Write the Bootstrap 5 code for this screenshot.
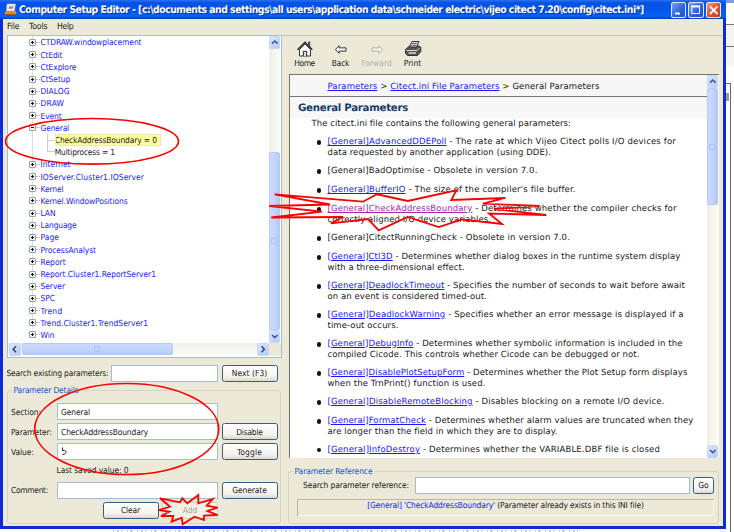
<!DOCTYPE html>
<html lang="en">
<head>
<meta charset="utf-8">
<title>Computer Setup Editor</title>
<link href="https://cdn.jsdelivr.net/npm/bootstrap@5.3.0/dist/css/bootstrap.min.css" rel="stylesheet">
<style>
html,body{width:734px;height:532px;overflow:hidden}
body{background:#fff;font-family:"DejaVu Sans Condensed","DejaVu Sans",sans-serif;font-stretch:condensed;font-size:8.4px;line-height:12px;color:#222;text-rendering:geometricPrecision}
.fit{display:inline-block;white-space:pre}
.stage{width:734px;height:532px}
.win{width:726px;height:529px;background:#ece9d8;border:solid #0a2bd6;border-width:0 3px 3px 3px}
.titlebar{height:19px;margin:0 -3px;padding:0 5px 0 4px;background:linear-gradient(#2a72f0 0,#0651e6 15%,#0557ec 60%,#0463fa 85%,#0440c8);color:#fff;font-weight:700;font-size:10.3px;text-shadow:1px 1px #0a3296}
.appicon{margin-right:2px}
.capbtns{gap:2px}
.capbtn{width:15.5px;height:16px;border:1px solid #dfe9ff;border-radius:2px;background:linear-gradient(135deg,#7ba2f6,#2a5fe0 60%,#2452cc)}
.capclose{background:linear-gradient(135deg,#f0a184,#e2512b 50%,#c8401c)}
.menus{height:16px;padding:1.5px 0 0 4px;font-size:8.6px;gap:9.5px}
.leftcol{width:278px;padding-left:3.5px}
.treebox{width:275px;height:323px;border:1px solid #a6bfd3;background:#fff}
.rows{height:307px;padding:.4px 0 0 21px;color:#1a1aff}
.trow{height:12.196px}
.pm{width:7px;height:7px;border:1px solid #8fa6b5;border-radius:1px;background:linear-gradient(90deg,#111,#111) 1px 2px/3px 1px no-repeat,#f3f2ea;position:relative}
.pm.plus::after{content:"";position:absolute;left:2px;top:1px;width:1px;height:3px;background:#111}
.stem{width:4px;margin-right:1px;border-top:1px dotted #bbb}
.trunk{background:linear-gradient(#ddd,#ddd) 3px 0/1px 100% no-repeat}
.kid{color:#222;padding-left:18px}
.kid .twig{width:8.3px;height:12px;border-left:1px solid #ccc;background:linear-gradient(#ccc,#ccc) 0 6px/6px 1px no-repeat}
.kid.final .twig{height:6px;border-bottom:1px solid #ccc;background:none;align-self:flex-start}
.sel{background:#ffff99;width:106.5px;height:12px;outline:1px solid #ebe9b4;outline-offset:-1px}
.vbar{width:12px;background:linear-gradient(90deg,#f0efe6,#fdfdfa)}
.hbar{height:13px;padding-left:1.5px;gap:1px;background:linear-gradient(#f0efe6,#fdfdfa)}
.corner{width:12px;background:#ece9d8}
.sbtn{width:11.5px;height:13px;border-radius:2px;background:linear-gradient(135deg,#dbe6ff,#b5cbfa);border:1px solid #c5d6f8}
.vthumb{width:11.5px;border-radius:2px;background:linear-gradient(90deg,#cbdafe,#c2d3fd 60%,#b3c8f6);border:1px solid #b6caf5}
.treethumb{height:178px;margin-top:103px}
.docthumb{height:117px}
.hthumb{height:12px;width:151.5px;border-radius:2px;background:linear-gradient(#cbdafe,#c2d3fd 60%,#b3c8f6);border:1px solid #b6caf5}
.grip{width:6px;height:6px;border:1px solid #a9c1f3;border-radius:1px}
.inp{background:#fff;border:1px solid #a3bdd2;height:17px;padding-left:3.5px}
.xbtn{height:17px;width:56px;border:1px solid #335f88;border-radius:2.5px;background:linear-gradient(#fff,#f4f3ee 70%,#dcd8cb);white-space:nowrap}
.xbtn.off{border-color:#d4d0c0;background:#f3f1e7;color:#a6a497}
.gobtn{width:21px}
.findrow{height:17px;margin-top:6.5px}
.findrow .inp{width:106.5px;margin:0 4px 0 2.5px}
.grp{border:1px solid #d6d3c2;border-radius:3px;position:relative}
.details{width:274.5px;height:134px;margin-top:8px;padding-top:9.5px}
.legendtxt{position:absolute;top:-7px;left:4px;padding:0 2px;background:#ece9d8;color:#1a52cf}
.frow{padding:3px 0 0 3.5px}
.frow .inp{width:161px;margin-right:4px}
.lab{width:45.5px}
.saved{padding:4px 0 0 49px;height:18.5px}
.acts{padding:3px 0 0 95px;gap:3.5px}
.rightcol{width:442px;border-top:1px solid #c9c6b5}
.tools{height:38px;padding:4px 0 0 5.5px}
.tool{width:36px}
.dim{color:#b5b2a3}
.doc{width:430px;height:384px;margin-left:7.5px;border:solid #77756a;border-width:1.5px 0 0 1.5px;background:#fff;font-family:"DejaVu Sans",sans-serif;font-stretch:normal;font-size:8.5px;line-height:11.3px}
.band{background:#f7f7f7}
.crumbs{height:22px;border-bottom:1px solid #777;padding:6.5px 0 0 38px}
.heading{height:21px;font-size:10.2px;font-weight:700;color:#163c6e;padding:5.5px 0 0 8.5px}
.intro{height:18.7px;padding:1.4px 0 0 22px}
.doc a{color:#1a1aff;text-decoration:underline;text-underline-offset:1px}
.doc a.seen{color:#a02aa8}
.plist{padding-left:38px;list-style:none}
.plist li{position:relative;margin-bottom:7.7px;height:11.3px}
.plist li.two{margin-bottom:6.4px;height:22.6px}
.plist li::before{content:"";position:absolute;left:-10.5px;top:3.6px;width:4.4px;height:4.4px;border-radius:50%;background:#111}
.plist .fit{display:table;height:11.3px}
.refbox{width:431.5px;height:53px;margin:13px 0 0 6.5px}
.refrow{padding:4.5px 0 0 14.5px}
.refrow .inp{width:275px;margin:0 3.5px 0 5.5px}
.status{height:17.5px;margin:5px 4.5px 0 8px;padding-bottom:5px;border:solid #b9b6a6;border-width:1px 0 0 1px;box-shadow:inset -1px -1px #f8f7f0}
.key{color:#1a1aff}
.behind{width:8px;height:532px;background:linear-gradient(#7f9bea,#7f9bea) 0 0/100% 3px no-repeat,linear-gradient(#777,#777) 0 24px/100% 1px no-repeat,linear-gradient(#777,#777) 0 46px/100% 1px no-repeat,linear-gradient(#f4f4f4,#f4f4f4) 0 24px/100% 42px no-repeat,#fff}
.behind .edge{width:5px;height:449px;margin-top:83px;border:solid #666;border-width:1px 1px 0 0;background:linear-gradient(#999,#999) 0 9px/3px 8px no-repeat}
.marks{position:absolute;left:0;top:0;pointer-events:none}
</style>
<script src="https://cdn.jsdelivr.net/npm/bootstrap@5.3.0/dist/js/bootstrap.bundle.min.js"></script>
</head>
<body>
<div class="stage position-relative overflow-hidden">
<div class="d-flex">
<div class="win d-flex flex-column flex-shrink-0">
  <div class="titlebar d-flex align-items-center flex-shrink-0">
    <svg width="13" height="13" viewBox="0 0 13 13" class="appicon"><path d="M3 1h8.500l-1 7h-8z" fill="#f3efe4" stroke="#c9b69a" stroke-width=".6"/><path d="M5 3.200h4.500l-.5 2.600H4.600z" fill="#8d8f96"/><path d="M.8 9.300 2.500 8h9l.7 1.300v2.600H.8z" fill="#e58a2e"/><path d="M.8 11.700h11.400" stroke="#8f4a10"/></svg>
    <span class="fit" data-w="624.5">Computer Setup Editor - [c:\documents and settings\all users\application data\schneider electric\vijeo citect 7.20\config\citect.ini*]</span>
    <div class="capbtns d-flex ms-auto">
      <div class="capbtn"><svg width="13" height="14" class="d-block"><path d="M3 10.500h5" stroke="#fff" stroke-width="2"/></svg></div>
      <div class="capbtn"><svg width="13" height="14" class="d-block"><path d="M2.800 3.200h7.700v7.300H2.800z" fill="none" stroke="#fff"/><path d="M2.300 3.500h8.700" stroke="#fff" stroke-width="1.800"/></svg></div>
      <div class="capbtn capclose"><svg width="13" height="14" class="d-block"><path d="m3 3.300 7.500 7.700m0-7.700L3 11" stroke="#fff" stroke-width="1.800"/></svg></div>
    </div>
  </div>
  <div class="menus d-flex flex-shrink-0"><span class="fit" data-w="12.5">File</span><span class="fit" data-w="18.5">Tools</span><span class="fit" data-w="16.5">Help</span></div>
  <div class="d-flex">
    <div class="leftcol flex-shrink-0">
      <div class="treebox d-flex flex-column">
        <div class="d-flex">
          <div class="rows flex-grow-1" id="tree"></div>
          <div class="vbar d-flex flex-column flex-shrink-0">
            <div class="sbtn"><svg width="10" height="11" class="d-block"><path d="m2 6.700 2.800-2.700 2.800 2.700" fill="none" stroke="#445c85" stroke-width="1.600"/></svg></div>
            <div class="vthumb treethumb d-flex align-items-center justify-content-center"><i class="grip"></i></div>
            <div class="sbtn"><svg width="10" height="11" class="d-block"><path d="m2 4 2.800 2.700 2.800-2.700" fill="none" stroke="#445c85" stroke-width="1.600"/></svg></div>
          </div>
        </div>
        <div class="d-flex">
          <div class="hbar d-flex flex-grow-1">
            <div class="sbtn"><svg width="10" height="11" class="d-block"><path d="m6 2.300-2.800 3 2.800 3" fill="none" stroke="#334c75" stroke-width="1.600"/></svg></div>
            <div class="hthumb d-flex align-items-center justify-content-center"><i class="grip"></i></div>
            <div class="sbtn ms-auto"><svg width="10" height="11" class="d-block"><path d="m3.500 2.300 2.800 3-2.800 3" fill="none" stroke="#334c75" stroke-width="1.600"/></svg></div>
          </div>
          <div class="corner"></div>
        </div>
      </div>
      <div class="findrow d-flex align-items-center">
        <span class="fit" data-w="102">Search existing parameters:</span>
        <div class="inp"></div>
        <div class="xbtn d-flex align-items-center justify-content-center"><span class="fit" data-w="35.5">Next (F3)</span></div>
      </div>
      <div class="grp details">
        <span class="legendtxt"><span class="fit" data-w="65">Parameter Details</span></span>
        <div class="frow d-flex align-items-center"><span class="lab"><span class="fit" data-w="30">Section:</span></span><div class="inp d-flex align-items-center"><span class="fit" data-w="29">General</span></div></div>
        <div class="frow d-flex align-items-center"><span class="lab"><span class="fit" data-w="41">Parameter:</span></span><div class="inp d-flex align-items-center"><span class="fit" data-w="87">CheckAddressBoundary</span></div><div class="xbtn d-flex align-items-center justify-content-center"><span class="fit" data-w="26.5">Disable</span></div></div>
        <div class="frow d-flex align-items-center"><span class="lab"><span class="fit" data-w="23">Value:</span></span><div class="inp d-flex align-items-center"><svg width="6" height="9"><path d="M1.500 .5v3h1.800M3.300 3l1.500 1.500c.3 1-.3 3-3.300 3" fill="none" stroke="#222"/></svg></div><div class="xbtn d-flex align-items-center justify-content-center"><span class="fit" data-w="25">Toggle</span></div></div>
        <div class="saved"><span class="fit" data-w="72">Last saved value: 0</span></div>
        <div class="frow d-flex align-items-center"><span class="lab"><span class="fit" data-w="37">Comment:</span></span><div class="inp"></div><div class="xbtn d-flex align-items-center justify-content-center"><span class="fit" data-w="34.5">Generate</span></div></div>
        <div class="acts d-flex"><div class="xbtn d-flex align-items-center justify-content-center"><span class="fit" data-w="19">Clear</span></div><div class="xbtn off d-flex align-items-center justify-content-center"><span class="fit" data-w="14.5">Add</span></div></div>
      </div>
    </div>
    <div class="rightcol flex-shrink-0">
      <div class="tools d-flex">
        <div class="tool d-flex flex-column align-items-center"><svg width="18" height="17" viewBox="0 0 18 17"><path d="M3.500 9.500V16h11V9.500L9 4z" fill="#fff" stroke="#333"/><path d="M1.500 9.800 9 2.300l7.300 7.500" fill="none" stroke="#222" stroke-width="1.300"/><path d="M12 1.500h2.300V7L12 4.800z" fill="#555"/><path d="M7.300 16v-4.700h3.400V16" fill="#ddd" stroke="#222"/></svg><span class="fit" data-w="20.5">Home</span></div>
        <div class="tool d-flex flex-column align-items-center"><svg width="14" height="17" viewBox="0 0 14 17"><path d="M1.300 9.500 5.200 5.700v2.200h6.800v3.200H5.200v2.200z" fill="#fff" stroke="#333"/></svg><span class="fit" data-w="17.5">Back</span></div>
        <div class="tool dim d-flex flex-column align-items-center"><svg width="14" height="17" viewBox="0 0 14 17"><path d="M12.700 9.500 8.800 5.700v2.200H2v3.200h6.800v2.200z" fill="#f5f3e8" stroke="#b5b2a3"/></svg><span class="fit" data-w="30.5">Forward</span></div>
        <div class="tool d-flex flex-column align-items-center"><svg width="18" height="17" viewBox="0 0 18 17"><path d="m1.500 9.500 4-3.500H15l1.800 1.200v4.300l-3.300 4H3.500l-2-2z" fill="#555" stroke="#333"/><path d="m5.500 7 2.500-5.500h7L12.500 7z" fill="#ddd" stroke="#333"/><path d="M8.300 3.500h4.500M7.500 5.300h4.700" stroke="#666"/><path d="M2.300 10.500H13l2.500-2.500" fill="none" stroke="#ddd"/><path d="M4.500 13H12" stroke="#eee" stroke-width="1.300"/></svg><span class="fit" data-w="17.5">Print</span></div>
      </div>
      <div class="doc d-flex">
        <div class="flex-grow-1 overflow-hidden">
          <div class="band crumbs"><span class="fit" data-w="272"><a href="#">Parameters</a> &gt; <a href="#">Citect.ini File Parameters</a> &gt; General Parameters</span></div>
          <div class="band heading"><span class="fit" data-w="110">General Parameters</span></div>
          <div class="intro"><span class="fit" data-w="259.5">The citect.ini file contains the following general parameters:</span></div>
          <ul class="plist mb-0">
            <li class="two"><span class="fit" data-w="348.5"><a href="#">[General]AdvancedDDEPoll</a> - The rate at which Vijeo Citect polls I/O devices for</span><span class="fit" data-w="223.5">data requested by another application (using DDE).</span></li>
            <li><span class="fit" data-w="210">[General]BadOptimise - Obsolete in version 7.0.</span></li>
            <li><span class="fit" data-w="248"><a href="#">[General]BufferIO</a> - The size of the compiler's file buffer.</span></li>
            <li class="two"><span class="fit" data-w="349"><a href="#" class="seen">[General]CheckAddressBoundary</a> - Determines whether the compiler checks for</span><span class="fit" data-w="163.5">correctly aligned I/O device variables.</span></li>
            <li><span class="fit" data-w="242.5">[General]CitectRunningCheck - Obsolete in version 7.0.</span></li>
            <li class="two"><span class="fit" data-w="353"><a href="#">[General]Ctl3D</a> - Determines whether dialog boxes in the runtime system display</span><span class="fit" data-w="137">with a three-dimensional effect.</span></li>
            <li class="two"><span class="fit" data-w="357.5"><a href="#">[General]DeadlockTimeout</a> - Specifies the number of seconds to wait before await</span><span class="fit" data-w="159.5">on an event is considered timed-out.</span></li>
            <li class="two"><span class="fit" data-w="356"><a href="#">[General]DeadlockWarning</a> - Specifies whether an error message is displayed if a</span><span class="fit" data-w="71">time-out occurs.</span></li>
            <li class="two"><span class="fit" data-w="355"><a href="#">[General]DebugInfo</a> - Determines whether symbolic information is included in the</span><span class="fit" data-w="312">compiled Cicode. This controls whether Cicode can be debugged or not.</span></li>
            <li class="two"><span class="fit" data-w="360"><a href="#">[General]DisablePlotSetupForm</a> - Determines whether the Plot Setup form displays</span><span class="fit" data-w="158">when the TrnPrint() function is used.</span></li>
            <li><span class="fit" data-w="337"><a href="#">[General]DisableRemoteBlocking</a> - Disables blocking on a remote I/O device.</span></li>
            <li class="two"><span class="fit" data-w="366"><a href="#">[General]FormatCheck</a> - Determines whether alarm values are truncated when they</span><span class="fit" data-w="230">are longer than the field in which they are to display.</span></li>
            <li><span class="fit" data-w="332.5"><a href="#">[General]InfoDestroy</a> - Determines whether the VARIABLE.DBF file is closed</span></li>
          </ul>
        </div>
        <div class="vbar d-flex flex-column flex-shrink-0">
          <div class="sbtn"><svg width="10" height="11" class="d-block"><path d="m2 6.700 2.800-2.700 2.800 2.700" fill="none" stroke="#445c85" stroke-width="1.600"/></svg></div>
          <div class="vthumb docthumb d-flex align-items-center justify-content-center"><i class="grip"></i></div>
          <div class="sbtn mt-auto"><svg width="10" height="11" class="d-block"><path d="m2 4 2.800 2.700 2.800-2.700" fill="none" stroke="#445c85" stroke-width="1.600"/></svg></div>
        </div>
      </div>
      <div class="grp refbox">
        <span class="legendtxt"><span class="fit" data-w="78">Parameter Reference</span></span>
        <div class="refrow d-flex align-items-center"><span class="fit" data-w="106">Search parameter reference:</span><div class="inp"></div><div class="xbtn gobtn d-flex align-items-center justify-content-center"><span class="fit" data-w="10.5">Go</span></div></div>
        <div class="status d-flex align-items-center justify-content-center"><span class="fit" data-w="276.5"><span class="key">[General] 'CheckAddressBoundary'</span> (Parameter already exists in this INI file)</span></div>
      </div>
    </div>
  </div>
</div>
<div class="behind"><div class="edge"></div></div>
</div>
<svg class="marks" width="734" height="532" fill="none" stroke="#f80000" stroke-width="1.800">
  <path d="M113 531H580" stroke="#999" stroke-width="1" stroke-dasharray="1 3 2 2 1 5 1 2 3 4"/>
  <ellipse cx="92" cy="141.300" rx="86.500" ry="22.800" stroke-width="1.600"/>
  <ellipse cx="126.700" cy="429" rx="92" ry="45.500" stroke-width="1.600"/>
  <path d="M274.700 194.300 330 204.500 269.300 206 322 211.700 271.300 217.500 343 217 331 223.300 368 219 378.700 230.300 407.700 217 438.700 227 462 219.500 502 224 489 213.500 546.300 215 494 209 539.700 206 483 203.700 505.300 198 451.300 200 456.300 190.300 407.700 201 377 194.300 363 201.700Z"/>
  <path d="m160 498.300 20 4 2.300-4 5 5 11-8.300v8.300l14.400-4.300-6 6.700 10.800 2-10 3.300 10 4-13.500.7v4.300l-9.500-3.300-11.800 7.600-1-6.600-10 4 1.600-5.700h-12.300l8.300-4.300-10.300-1.700 11-3.300Z"/>
</svg>
</div>
<script>
// Section names with the pixel span of each label.
var sections = [['CTDRAW.windowplacement',101],['CtEdit',21.8],['CtExplore',35.8],['CtSetup',29.8],['DIALOG',29],['DRAW',23.8],['Event',21],['General',28.5],
  ['CheckAddressBoundary = 0',102,'sel'],['Multiprocess = 1',60,'final'],['Internet',30],['IOServer.Cluster1.IOServer',103.5],['Kernel',23],
  ['Kernel.WindowPositions',87],['LAN',15],['Language',36],['Page',18.5],['ProcessAnalyst',55.5],['Report',25.2],['Report.Cluster1.ReportServer1',115.5],
  ['Server',24.5],['SPC',14.5],['Trend',22],['Trend.Cluster1.TrendServer1',107.5],['Win',14]];
document.getElementById('tree').innerHTML = sections.map(function (s) {
  var label = '<span class="fit" data-w="' + s[1] + '">' + s[0] + '</span>';
  var row = '<div class="trow d-flex align-items-center ' + (s[0] === 'Win' ? '' : 'trunk ');
  if (s[2] === 'sel') return row + 'kid"><i class="twig"></i><span class="sel d-flex align-items-center">' + label + '</span></div>';
  if (s[2] === 'final') return row + 'kid final"><i class="twig"></i>' + label + '</div>';
  return row + '"><i class="pm ' + (s[0] === 'General' ? '' : 'plus') + '"></i><i class="stem"></i>' + label + '</div>';
}).join('');
// Spread each label's letters so that the run spans its design width.
document.querySelectorAll('.fit').forEach(function (el) {
  var gap = (parseFloat(el.dataset.w) - el.getBoundingClientRect().width) / el.textContent.length;
  el.style.letterSpacing = gap.toFixed(3) + 'px';
});
</script>
</body>
</html>
